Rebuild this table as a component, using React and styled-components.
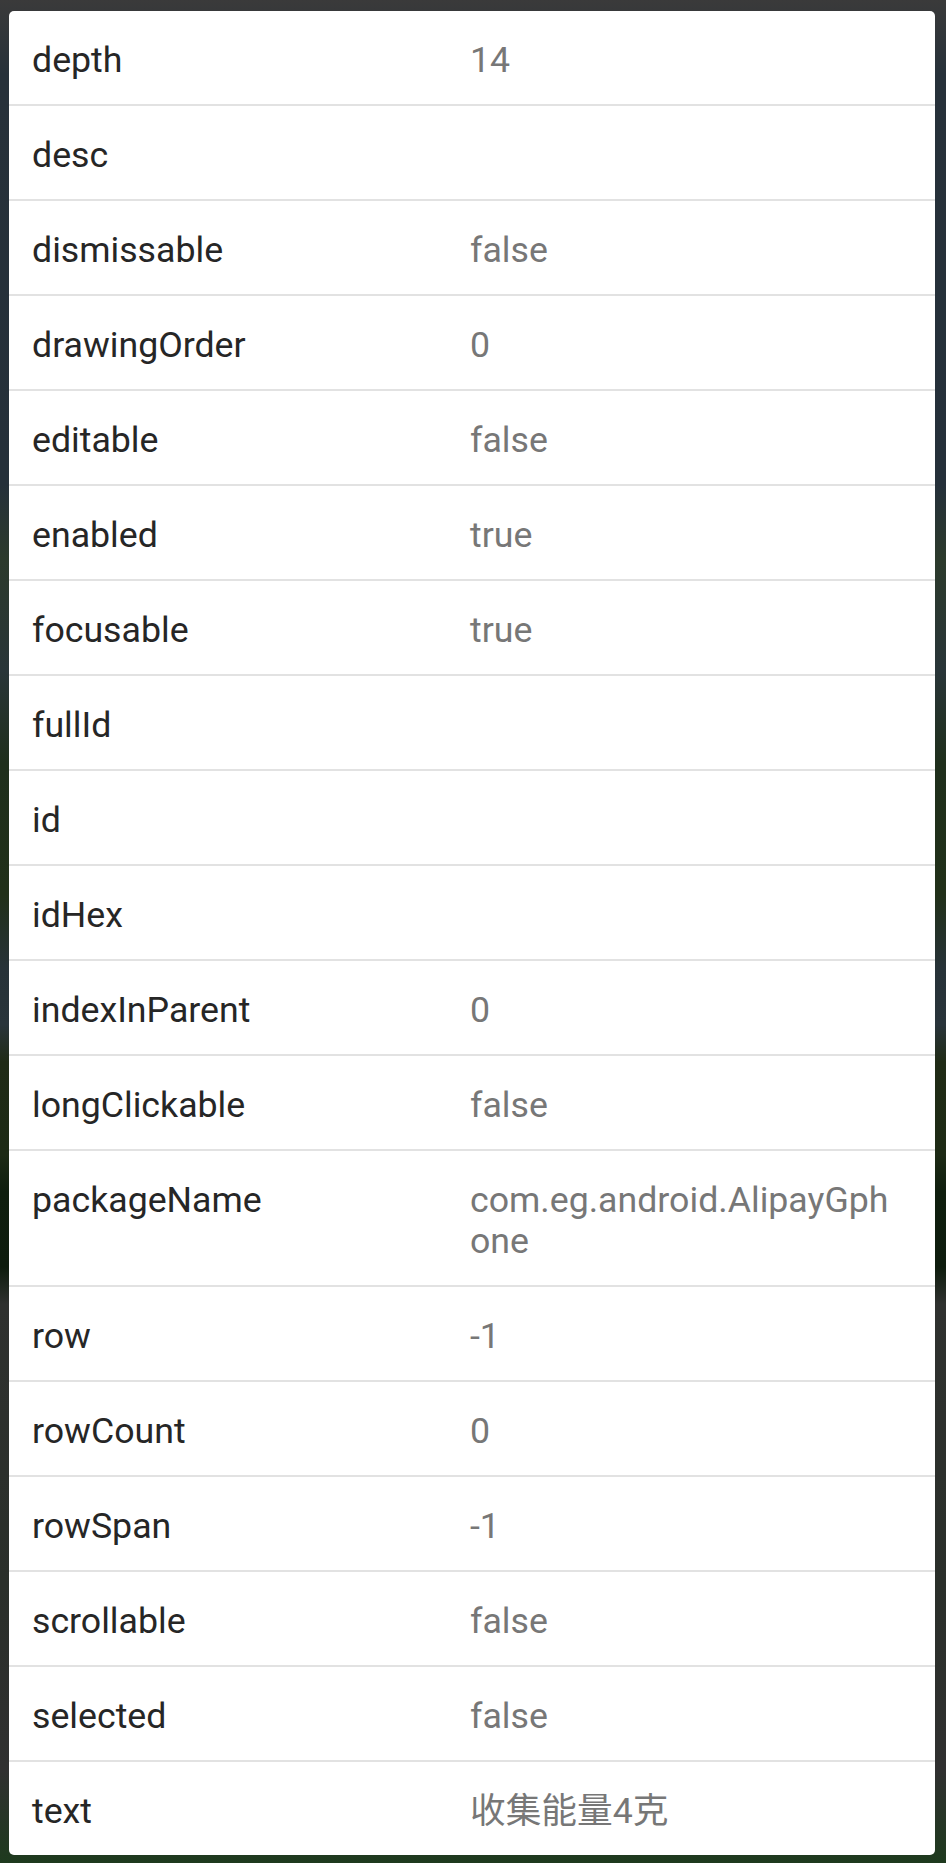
import React from "react";
import styled, { createGlobalStyle } from "styled-components";

const GlobalStyle = createGlobalStyle`
  html, body {
    margin: 0;
    padding: 0;
  }
  body {
    font-family: Roboto, "Noto Sans", "Noto Sans CJK SC", sans-serif;
    background: linear-gradient(
      to bottom,
      #3a3a3a 0%,
      #27313a 4%,
      #25303a 26%,
      #2c3a2c 30%,
      #293538 36%,
      #1f2f1c 41%,
      #213019 48%,
      #273238 52%,
      #29343a 55%,
      #202b16 57%,
      #1d2a15 62%,
      #0f1e0e 64%,
      #0e1c0d 68%,
      #2f312f 70%,
      #2a2f2a 85%,
      #303030 95%,
      #1e3a1e 100%
    );
    min-height: 1863px;
  }
`;

const Page = styled.div`
  padding: 11px 11px 7px 9px;
`;

const Card = styled.div`
  background: #ffffff;
  border-radius: 5px;
  overflow: hidden;
`;

const Row = styled.div`
  display: grid;
  grid-template-columns: 438px 1fr;
  padding: 29px 30px 23px 23px;
  border-bottom: 2px solid #e2e2e2;

  &:last-child {
    border-bottom: none;
  }
`;

const Key = styled.div`
  font-size: 35.7px;
  line-height: 41px;
  color: #262626;
`;

const Value = styled.div`
  font-size: 35.7px;
  line-height: 41px;
  color: #777777;
  word-break: break-all;
`;

const props = [
  ["depth", "14"],
  ["desc", ""],
  ["dismissable", "false"],
  ["drawingOrder", "0"],
  ["editable", "false"],
  ["enabled", "true"],
  ["focusable", "true"],
  ["fullId", ""],
  ["id", ""],
  ["idHex", ""],
  ["indexInParent", "0"],
  ["longClickable", "false"],
  ["packageName", "com.eg.android.AlipayGphone"],
  ["row", "-1"],
  ["rowCount", "0"],
  ["rowSpan", "-1"],
  ["scrollable", "false"],
  ["selected", "false"],
  ["text", "收集能量4克"],
];

const App = () => {
  return (
    <>
      <GlobalStyle />
      <Page>
        <Card>
          {props.map(([name, value]) => (
            <Row key={name}>
              <Key>{name}</Key>
              <Value>{value}</Value>
            </Row>
          ))}
        </Card>
      </Page>
    </>
  );
};

export default App;
